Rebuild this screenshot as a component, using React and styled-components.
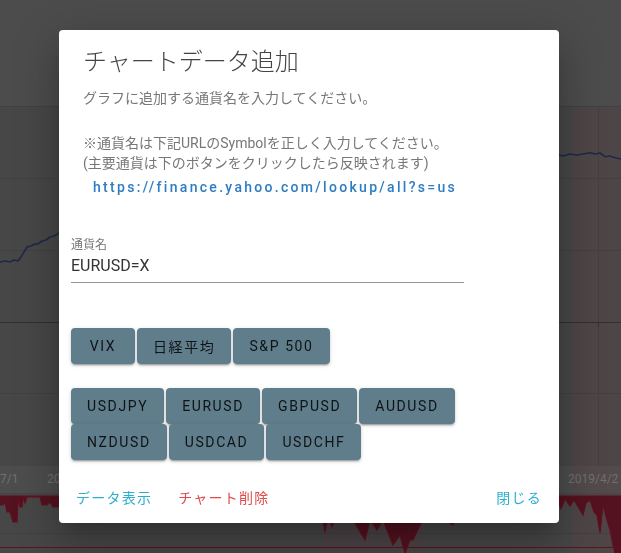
import React from "react";
import styled, { createGlobalStyle } from "styled-components";

const GlobalStyle = createGlobalStyle`
  html, body {
    margin: 0;
    padding: 0;
    height: 100%;
  }
  body {
    background: #4b4b4b;
    font-family: Roboto, "Noto Sans CJK JP", sans-serif;
    overflow: hidden;
  }
  #root {
    height: 100%;
  }
`;

const Page = styled.div`
  display: flex;
  flex-direction: column;
  height: 100vh;
`;

const TopBar = styled.header`
  flex: none;
  height: 106px;
  background: #4c4c4c;
`;

const ChartPanel = styled.main`
  flex: 1;
  min-height: 0;
  background: #474747;

  svg {
    display: block;
    width: 100%;
    height: 100%;
  }
`;

const Scrim = styled.div`
  position: fixed;
  inset: 0;
  display: flex;
  align-items: center;
  justify-content: center;
  padding-right: 3px;
`;

const Dialog = styled.section`
  width: 500px;
  background: #ffffff;
  border-radius: 4px;
  display: flex;
  flex-direction: column;
  box-shadow: 0 11px 15px -7px rgba(0, 0, 0, 0.2),
    0 24px 38px 3px rgba(0, 0, 0, 0.14), 0 9px 46px 8px rgba(0, 0, 0, 0.12);
`;

const Title = styled.h2`
  margin: 0;
  padding: 16px 24px 10px;
  font-size: 24px;
  line-height: 32px;
  font-weight: 300;
  color: #444444;
`;

const Body = styled.div`
  padding: 0 24px;
  font-size: 14px;
  color: #777777;
`;

const Lead = styled.p`
  margin: 0 0 25px;
  line-height: 20px;
`;

const Note = styled.p`
  margin: 0;
  line-height: 20px;
`;

const SourceLink = styled.a`
  display: block;
  padding-left: 10px;
  line-height: 28px;
  color: #2d7cc4;
  font-weight: 500;
  letter-spacing: 2.3px;
  text-decoration: none;
  white-space: nowrap;
`;

const Form = styled.div`
  padding: 0 12px;
  margin-top: 36px;
  display: flex;
  flex-direction: column;
`;

const Field = styled.label`
  display: flex;
  flex-direction: column;
  width: 393px;
`;

const FieldLabel = styled.span`
  font-size: 12px;
  line-height: 16px;
  color: #777777;
`;

const FieldInput = styled.input`
  box-sizing: content-box;
  height: 20px;
  padding: 3px 0 6px;
  margin: 0;
  border: none;
  border-bottom: 1px solid #949494;
  outline: none;
  background: transparent;
  font-family: Roboto, "Noto Sans CJK JP", sans-serif;
  font-size: 16px;
  line-height: 20px;
  color: #333333;
`;

const ButtonRow = styled.div`
  display: flex;
  flex-wrap: wrap;
  gap: 0 2px;
  width: 393px;
  margin-top: ${(p) => p.$gap}px;
`;

const ChipButton = styled.button`
  height: 36px;
  min-width: 64px;
  padding: 0 16px;
  border: none;
  border-radius: 4px;
  background: #607d8b;
  color: rgba(0, 0, 0, 0.85);
  font-family: Roboto, "Noto Sans CJK JP", sans-serif;
  font-size: 14px;
  font-weight: 400;
  letter-spacing: 1.6px;
  text-transform: uppercase;
  display: inline-flex;
  align-items: center;
  justify-content: center;
  box-shadow: 0 3px 1px -2px rgba(0, 0, 0, 0.2), 0 2px 2px 0 rgba(0, 0, 0, 0.14),
    0 1px 5px 0 rgba(0, 0, 0, 0.12);
  cursor: pointer;
`;

const Actions = styled.footer`
  display: flex;
  align-items: center;
  padding: 8px;
  margin-top: 11px;
`;

const TextButton = styled.button`
  height: 36px;
  padding: 0 9px;
  border: none;
  background: transparent;
  color: ${(p) => p.$tone};
  font-family: Roboto, "Noto Sans CJK JP", sans-serif;
  font-size: 14px;
  font-weight: 400;
  letter-spacing: 1.25px;
  cursor: pointer;

  & + & {
    margin-left: 8px;
  }
`;

const Spacer = styled.div`
  flex: 1;
`;

const mainButtons = ["VIX", "日経平均", "S&P 500"];
const pairButtons = [
  "USDJPY",
  "EURUSD",
  "GBPUSD",
  "AUDUSD",
  "NZDUSD",
  "USDCAD",
  "USDCHF",
];

const priceLine = {
  left:
    "0,262 5,261 10,262 14,260 18,261 21,257 24,252 27,247 31,246 35,244 38,244 42,241 46,240 50,237 54,236 59,233 70,230",
  right:
    "550,156 559,155 563,156 570,154 577,155 583,154 590,152.7 595,154 600,153 605,156.7 610,156 615,157.7 621,159",
};

const drawdown =
  "M0,496 L0,505 L3,505 L5,502 L7,512 L10,512 L13,522 L17,522 L18,498 L20,507 L22,507 L23,497 L25,503 L27,497 L40,497 L42,505 L47,505 L50,502 L53,507 L58,507 L62,500 L100,502 L150,505 L200,510 L250,505 L300,510 L322,515 L325,532 L328,515 L332,527 L336,512 L350,515 L365,540 L370,520 L377,530 L383,520 L393,545 L400,535 L405,553 L410,540 L413,540 L420,525 L430,510 L453,525 L457,510 L500,505 L558,502 L561,509 L565,499 L570,506 L574,500 L577,505 L583,515 L586,503 L590,500 L594,512 L597,515 L600,533 L603,505 L607,520 L610,530 L613,545 L615,553 L621,553 L621,496 Z";

function MarketChart() {
  return (
    <svg viewBox="0 106 621 447" preserveAspectRatio="none">
      <rect x="0" y="106" width="621" height="447" fill="#474747" />
      <rect x="572" y="106" width="49" height="447" fill="#4e4547" />
      <rect x="322" y="493" width="101" height="60" fill="#4c4446" />
      <rect x="0" y="466" width="572" height="27" fill="#4d4d4d" />
      <rect x="572" y="466" width="49" height="27" fill="#524a4b" />

      <g stroke="#414141" strokeWidth="1">
        <line x1="0" y1="106.5" x2="621" y2="106.5" />
        <line x1="0" y1="178.5" x2="621" y2="178.5" />
        <line x1="0" y1="250.5" x2="621" y2="250.5" />
        <line x1="0" y1="393.5" x2="621" y2="393.5" />
        <line x1="0" y1="533.5" x2="621" y2="533.5" />
        <line x1="598.5" y1="106" x2="598.5" y2="466" />
      </g>
      <line x1="0" y1="322.5" x2="621" y2="322.5" stroke="#303030" />
      <line x1="598.5" y1="322" x2="598.5" y2="327" stroke="#303030" />

      <g fill="#707070" fontSize="12" fontFamily="Roboto, sans-serif">
        <text x="0" y="483">7/1</text>
        <text x="47" y="483">2018/10/1</text>
        <text x="568" y="483">2019/4/2</text>
      </g>

      <g fill="none" stroke="#1f2947" strokeWidth="1.6" strokeLinejoin="round">
        <polyline points={priceLine.left} />
        <polyline points={priceLine.right} />
      </g>

      <path d={drawdown} fill="#52121f" stroke="#621020" strokeWidth="1.2" />
      <line x1="0" y1="547.5" x2="621" y2="547.5" stroke="#5a1521" />
    </svg>
  );
}

export default function App() {
  return (
    <>
      <GlobalStyle />
      <Page>
        <TopBar />
        <ChartPanel>
          <MarketChart />
        </ChartPanel>
      </Page>

      <Scrim>
        <Dialog role="dialog">
          <Title>チャートデータ追加</Title>
          <Body>
            <Lead>グラフに追加する通貨名を入力してください。</Lead>
            <Note>※通貨名は下記URLのSymbolを正しく入力してください。</Note>
            <Note>(主要通貨は下のボタンをクリックしたら反映されます)</Note>
            <SourceLink href="#lookup">
              https://finance.yahoo.com/lookup/all?s=us
            </SourceLink>
          </Body>

          <Form>
            <Field>
              <FieldLabel>通貨名</FieldLabel>
              <FieldInput defaultValue="EURUSD=X" />
            </Field>

            <ButtonRow $gap={45}>
              {mainButtons.map((name) => (
                <ChipButton key={name}>{name}</ChipButton>
              ))}
            </ButtonRow>

            <ButtonRow $gap={24}>
              {pairButtons.map((name) => (
                <ChipButton key={name}>{name}</ChipButton>
              ))}
            </ButtonRow>
          </Form>

          <Actions>
            <TextButton $tone="#2bb0cc">データ表示</TextButton>
            <TextButton $tone="#e04a4a">チャート削除</TextButton>
            <Spacer />
            <TextButton $tone="#2bb0cc">閉じる</TextButton>
          </Actions>
        </Dialog>
      </Scrim>
    </>
  );
}
